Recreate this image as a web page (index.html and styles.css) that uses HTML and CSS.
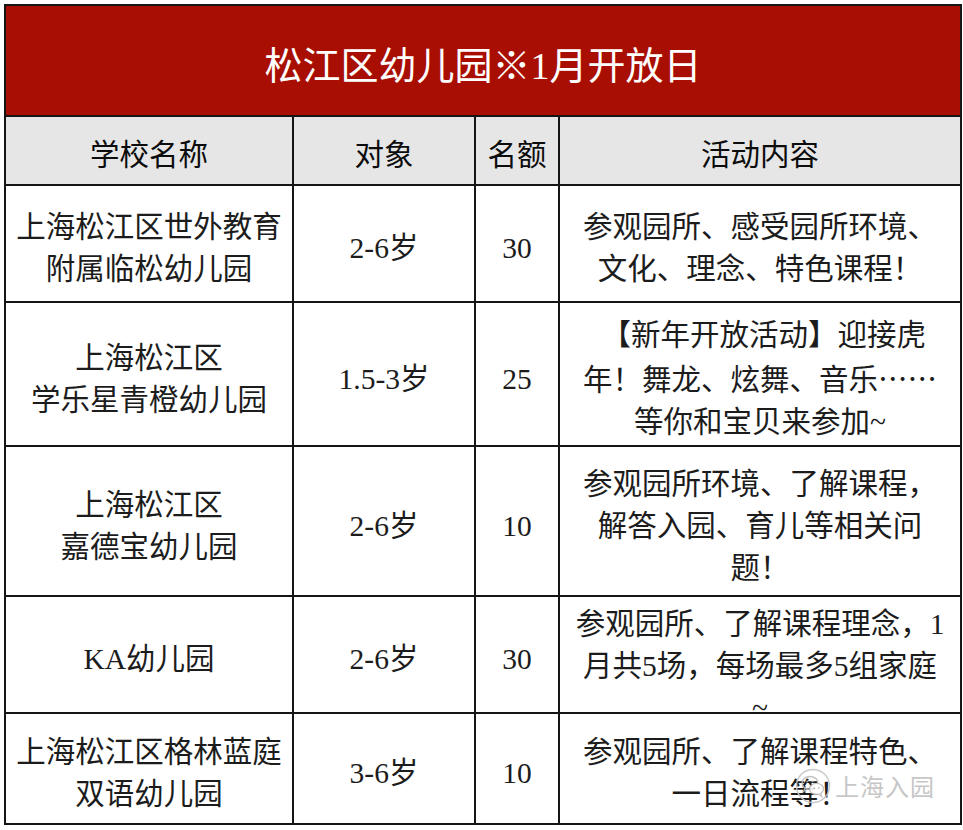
FILE: index.html
```html
<!DOCTYPE html>
<html lang="zh-CN">
<head>
<meta charset="utf-8">
<title>松江区幼儿园※1月开放日</title>
<link rel="stylesheet" href="styles.css">
</head>
<body>
<div class="page">
  <table class="sheet">
    <colgroup>
      <col class="c-name">
      <col class="c-age">
      <col class="c-num">
      <col class="c-act">
    </colgroup>
    <tr class="r-title">
      <td colspan="4" class="title">松江区幼儿园※1月开放日</td>
    </tr>
    <tr class="r-head">
      <th>学校名称</th>
      <th>对象</th>
      <th>名额</th>
      <th>活动内容</th>
    </tr>
    <tr class="r1">
      <td>上海松江区世外教育<br>附属临松幼儿园</td>
      <td>2-6岁</td>
      <td>30</td>
      <td>参观园所、感受园所环境、<br>文化、理念、特色课程！</td>
    </tr>
    <tr class="r2">
      <td>上海松江区<br>学乐星青橙幼儿园</td>
      <td>1.5-3岁</td>
      <td>25</td>
      <td>&nbsp;【新年开放活动】迎接虎<br>年！舞龙、炫舞、音乐<span class="cjk">……</span><br>等你和宝贝来参加~</td>
    </tr>
    <tr class="r3">
      <td>上海松江区<br>嘉德宝幼儿园</td>
      <td>2-6岁</td>
      <td>10</td>
      <td>参观园所环境、了解课程，<br>解答入园、育儿等相关问<br>题！</td>
    </tr>
    <tr class="r4">
      <td>KA幼儿园</td>
      <td>2-6岁</td>
      <td>30</td>
      <td class="overflow"><div class="overflow-box">参观园所、了解课程理念，1<br>月共5场，每场最多5组家庭<br>~</div></td>
    </tr>
    <tr class="r5">
      <td>上海松江区格林蓝庭<br>双语幼儿园</td>
      <td>3-6岁</td>
      <td>10</td>
      <td>参观园所、了解课程特色、<br>一日流程等！</td>
    </tr>
  </table>
  <div class="watermark">
    <svg class="wm-icon" viewBox="0 0 36 36" width="36" height="36" aria-hidden="true">
      <circle cx="18" cy="18" r="16.5" fill="none" stroke="#c4c4c4" stroke-width="1.5"/>
      <ellipse cx="15" cy="15" rx="8" ry="6.5" fill="none" stroke="#bdbdbd" stroke-width="1.4"/>
      <path d="M10 20 L8.5 23.5 L13 21" fill="none" stroke="#bdbdbd" stroke-width="1.2"/>
      <ellipse cx="21.5" cy="21" rx="7" ry="5.6" fill="#fff" stroke="#bdbdbd" stroke-width="1.4"/>
      <path d="M25.5 25.5 L27 28.5 L23 26.3" fill="#fff" stroke="#bdbdbd" stroke-width="1.2"/>
      <circle cx="12.2" cy="13.5" r="1" fill="#bdbdbd"/>
      <circle cx="17.6" cy="13.5" r="1" fill="#bdbdbd"/>
      <circle cx="19.3" cy="20" r="0.9" fill="#bdbdbd"/>
      <circle cx="23.8" cy="20" r="0.9" fill="#bdbdbd"/>
    </svg>
    <span class="wm-text">上海入园</span>
  </div>
</div>
</body>
</html>
```
FILE: styles.css
```css
html, body {
  margin: 0;
  padding: 0;
  background: #ffffff;
}

.page {
  position: relative;
  width: 963px;
  height: 830px;
  padding: 4px 0 0 4px;
  box-sizing: border-box;
}

.sheet {
  border-collapse: collapse;
  table-layout: fixed;
  width: 956px;
  font-family: "Liberation Serif", "Noto Sans CJK SC", serif;
  color: #1c1c1c;
  font-size: 29.5px;
  line-height: 42px;
}

.cjk {
  font-family: "Noto Sans CJK SC", sans-serif;
}

.c-name { width: 288px; }
.c-age { width: 182px; }
.c-num { width: 84px; }
.c-act { width: 402px; }

.sheet td,
.sheet th {
  border: 2px solid #151515;
  text-align: center;
  vertical-align: middle;
  padding: 9px 2px 0;
  white-space: nowrap;
  overflow: visible;
}

.sheet th {
  font-weight: normal;
  color: #0c0c0c;
  background: #e6e6e6;
}

.r-title { height: 111px; }
.r-head { height: 69px; }
.r1 { height: 117px; }
.r2 { height: 144px; }
.r3 { height: 150px; }
.r4 { height: 117px; }
.r5 { height: 111px; }

.sheet td.title {
  background: #a90e02;
  color: #ffffff;
  font-size: 38px;
  line-height: 44px;
  padding-top: 10px;
}

.sheet td.overflow {
  vertical-align: top;
  padding-top: 6px;
  padding-bottom: 0;
}

.overflow-box {
  height: 108px;
  overflow: visible;
}

.watermark {
  position: absolute;
  left: 795px;
  top: 768px;
  display: flex;
  align-items: center;
  gap: 4px;
  opacity: 0.9;
}

.wm-icon {
  display: block;
}

.wm-text {
  font-family: "Noto Sans CJK SC", sans-serif;
  font-size: 24px;
  line-height: 30px;
  color: #c2c2c2;
  letter-spacing: 1px;
}
```
